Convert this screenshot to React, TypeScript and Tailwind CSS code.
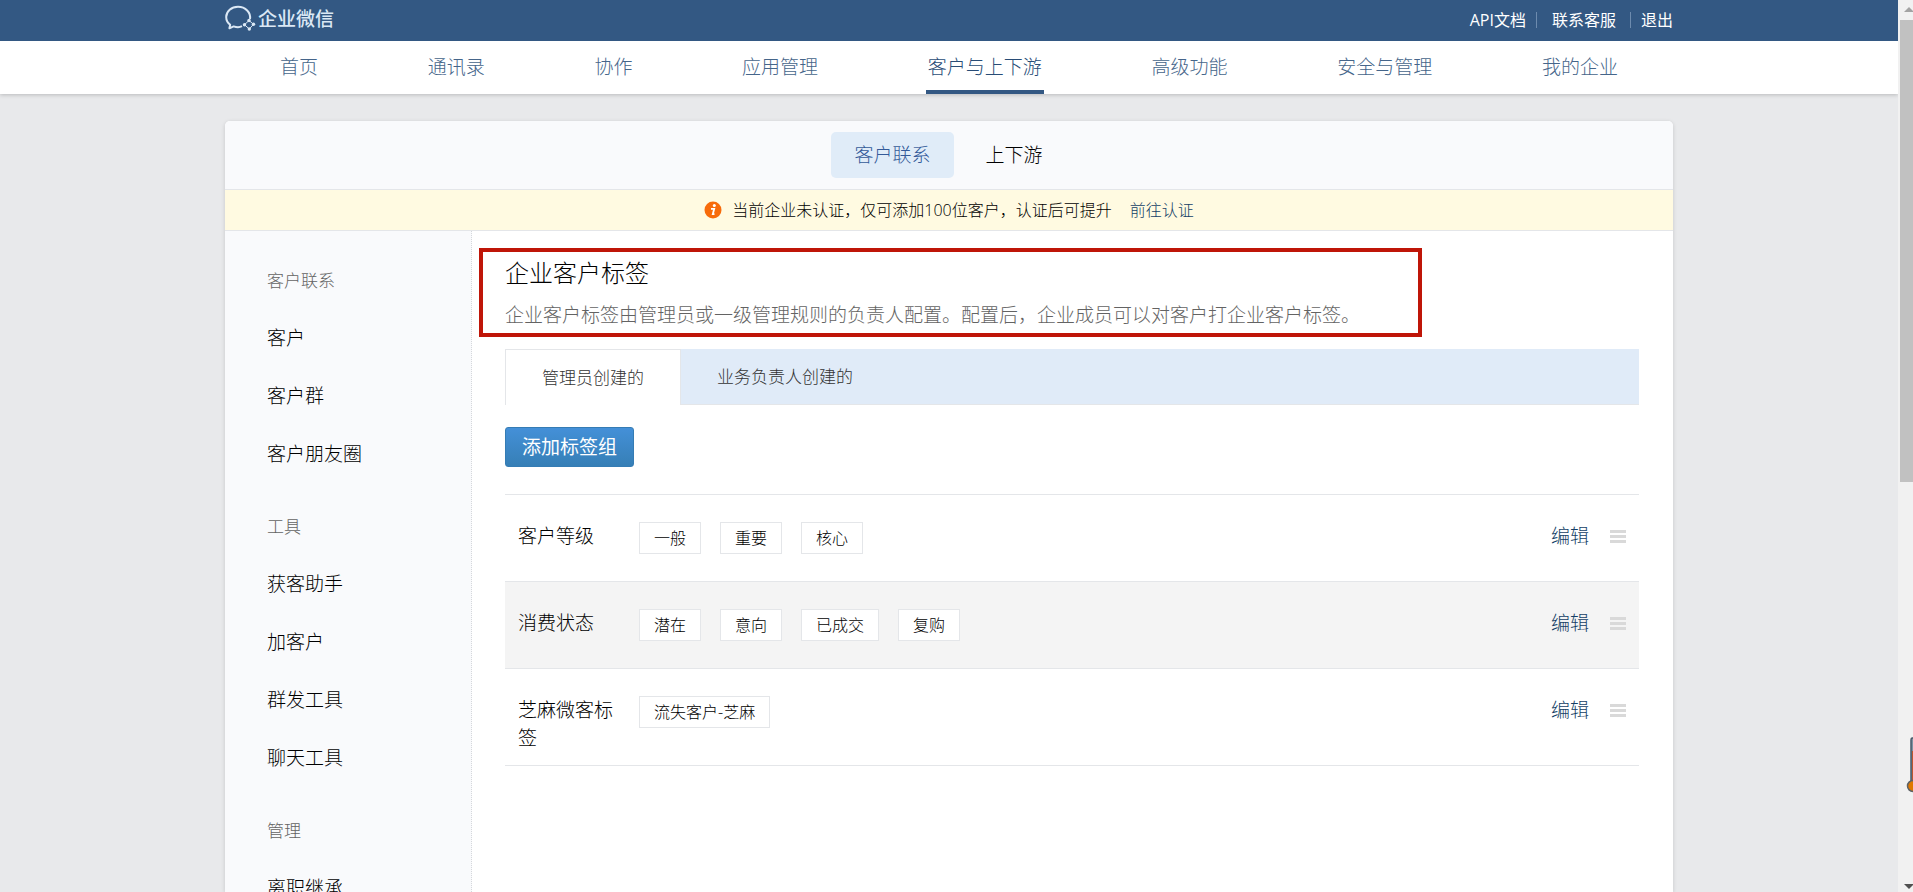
const navItems = ['首页', '通讯录', '协作', '应用管理', '客户与上下游', '高级功能', '安全与管理', '我的企业']

const menuGroups = [
    { title: '客户联系', items: ['客户', '客户群', '客户朋友圈'] },
    { title: '工具', items: ['获客助手', '加客户', '群发工具', '聊天工具'] },
    { title: '管理', items: ['离职继承'] },
]

type TagGroup = {
    id: number
    name: string
    tags: string[]
}

const tagGroups: TagGroup[] = [
    { id: 1, name: '客户等级', tags: ['一般', '重要', '核心'] },
    { id: 2, name: '消费状态', tags: ['潜在', '意向', '已成交', '复购'] },
    { id: 3, name: '芝麻微客标签', tags: ['流失客户-芝麻'] },
]

function Logo() {
    return (
        <a href="#" className="flex items-center gap-[2px] pb-1 text-[#dbe8f5]">
            <svg width="31" height="27" viewBox="0 0 31 27" fill="none" stroke="currentColor" strokeWidth="2">
                <path d="M25 14C26 7.500 20.500 1.800 13 1.800C6.500 1.800 1.200 6.200 1.200 12C1.200 15.200 2.700 17.900 5.200 19.800L4.400 23.300L8.600 21.400C11.600 22.400 15 22.300 17 21.200" strokeLinejoin="round" />
                <path d="M24 15.500L28.500 19.300L24.300 24L19.500 19.700Z" strokeWidth="1" />
                <circle cx="24" cy="15.500" r="1.700" fill="currentColor" stroke="none" />
                <circle cx="28.500" cy="19.300" r="1.700" fill="currentColor" stroke="none" />
                <circle cx="24.300" cy="24" r="1.700" fill="currentColor" stroke="none" />
                <circle cx="19.500" cy="19.700" r="1.700" fill="currentColor" stroke="none" />
            </svg>
            <span className="text-[19px] leading-7 font-medium">企业微信</span>
        </a>
    )
}

function Header() {
    return (
        <header className="relative shadow-[0_1px_4px_rgba(0,0,0,0.2)]">
            <div className="bg-[#335883]">
                <div className="mx-auto flex h-[41px] max-w-[1448px] items-center justify-between">
                    <Logo />
                    <div className="flex items-center pb-[2px] text-base leading-6 font-normal text-white">
                        <a href="#">API文档</a>
                        <span className="ml-[10px] h-4 w-px bg-[#6d8bae]"></span>
                        <a href="#" className="ml-[15px]">联系客服</a>
                        <span className="ml-[14px] h-4 w-px bg-[#6d8bae]"></span>
                        <a href="#" className="ml-[10px]">退出</a>
                    </div>
                </div>
            </div>
            <nav className="bg-white">
                <div className="mx-auto flex h-[53px] max-w-[1448px] justify-between px-[53px]">
                    {navItems.map((item) => (
                        <a key={item} href="#"
                            className={item === '客户与上下游'
                                ? 'border-b-4 border-[#335883] px-[2px] pt-3 text-[19px] leading-7 text-[#284c76]'
                                : 'px-[2px] pt-3 text-[19px] leading-7 text-[#45658a]'}>
                            {item}
                        </a>
                    ))}
                </div>
            </nav>
        </header>
    )
}

function Notice() {
    return (
        <div className="flex h-[42px] shrink-0 items-center justify-center border-y border-[#e4e6e9] bg-[#fffae1] text-base leading-6">
            <svg width="18" height="18" viewBox="0 0 18 18" className="mr-[10px]">
                <circle cx="9" cy="9" r="8.500" fill="#f76b0a" />
                <circle cx="10.300" cy="4.500" r="1.500" fill="#fff" />
                <path d="M7 7.800H10.200L8.800 13.200H10.500" fill="none" stroke="#fff" strokeWidth="1.800" />
            </svg>
            <span>当前企业未认证，仅可添加100位客户，认证后可提升</span>
            <a href="#" className="ml-[18px] text-[#143f66]">前往认证</a>
        </div>
    )
}

function Sidebar() {
    return (
        <aside className="w-[247px] shrink-0 border-r border-dotted border-[#d5d8dc] bg-[#f9fafc] pt-[22px] pl-[42px]">
            {menuGroups.map((group) => (
                <div key={group.title} className="mb-4">
                    <h3 className="text-[17px] leading-[56px] text-[#636363]">{group.title}</h3>
                    <ul>
                        {group.items.map((item) => (
                            <li key={item}>
                                <a href="#" className="block text-[19px] leading-[58px]">{item}</a>
                            </li>
                        ))}
                    </ul>
                </div>
            ))}
        </aside>
    )
}

function TagTable() {
    return (
        <table className="mt-[27px] w-full border-t border-[#e4e6e9]">
            <tbody>
                {tagGroups.map((group) => (
                    <tr key={group.id} className="border-b border-[#e4e6e9] align-top even:bg-[#f4f4f4]">
                        <th scope="row" className="w-[134px] pt-[27px] pr-[26px] pb-[13px] pl-[13px] text-left text-[19px] leading-7 font-light">
                            {group.name}
                        </th>
                        <td className="pt-[27px] pb-[13px]">
                            <ul className="flex flex-wrap gap-x-[19px]">
                                {group.tags.map((tag) => (
                                    <li key={tag} className="mb-[14px] border border-[#e4e6e9] bg-white px-[14px] text-base leading-[30px]">
                                        {tag}
                                    </li>
                                ))}
                            </ul>
                        </td>
                        <td className="w-[102px] pt-[27px] pr-[13px] pb-[13px]">
                            <div className="flex h-7 items-center justify-end gap-[21px]">
                                <button type="button" className="text-[19px] leading-7 text-[#143f66]">编辑</button>
                                <button type="button" aria-label="拖动排序">
                                    <svg width="16" height="13" viewBox="0 0 16 13" fill="#d9d9d9">
                                        <path d="M0 0H16V3H0ZM0 5H16V8H0ZM0 10H16V13H0Z" />
                                    </svg>
                                </button>
                            </div>
                        </td>
                    </tr>
                ))}
            </tbody>
        </table>
    )
}

function Content() {
    return (
        <main className="min-w-0 flex-1 pr-[34px] pl-[33px]">
            <div className="relative pt-[26px]">
                <h2 className="text-2xl leading-8">企业客户标签</h2>
                <p className="mt-3 text-[19px] leading-7 text-[#636363]">
                    企业客户标签由管理员或一级管理规则的负责人配置。配置后，企业成员可以对客户打企业客户标签。
                </p>
                <div className="pointer-events-none absolute top-[17px] -left-[26px] h-[89px] w-[943px] border-4 border-[#bf1508]"></div>
            </div>
            <div className="mt-5 flex h-14 bg-[#e0ebf8] text-[17px] text-[#333]">
                <button type="button" className="border-x border-t border-[#e4e6e9] bg-white px-9">管理员创建的</button>
                <button type="button" className="flex-1 border-b border-[#e4e6e9] px-9 text-left">业务负责人创建的</button>
            </div>
            <button type="button" className="mt-[22px] block h-10 rounded-[3px] border border-[#357cb4] bg-linear-to-b from-[#4490d8] to-[#367fb6] px-4 text-[19px] leading-7 font-normal text-white">
                添加标签组
            </button>
            <TagTable />
        </main>
    )
}

function ScrollRail() {
    return (
        <div className="relative flex w-[15px] shrink-0 flex-col justify-between overflow-hidden bg-[#f1f1f1] pl-[2px]">
            <div className="flex h-full flex-col">
                <svg width="13" height="20" viewBox="0 0 13 20" className="shrink-0">
                    <path d="M4 12L9 7L14 12Z" fill="#a3a3a3" />
                </svg>
                <div className="h-[53%] bg-[#c1c1c1]"></div>
            </div>
            <svg width="13" height="20" viewBox="0 0 13 20" className="shrink-0">
                <path d="M4 12L9 17L14 12Z" fill="#505050" />
            </svg>
            <svg width="8" height="56" viewBox="0 0 8 56" className="absolute right-0 bottom-[99px]">
                <path d="M8 1H7Q6 1 6 3V45H8Z" fill="#7d93a3" />
                <path d="M7 14H8V46H7Z" fill="#c0562f" />
                <path d="M8 1H7Q6 1 6 3V45" fill="none" stroke="#475969" strokeWidth="1.500" />
                <circle cx="8" cy="49" r="5.500" fill="#e07800" stroke="#5d6266" strokeWidth="1.500" />
            </svg>
        </div>
    )
}

export default function App() {
    return (
        <div className="flex h-screen overflow-hidden bg-[#e8e9eb] font-['Open_Sans','Noto_Sans_CJK_SC',sans-serif] font-light text-black">
            <div className="flex min-w-0 flex-1 flex-col">
                <Header />
                <div className="mx-auto mt-[27px] flex min-h-0 w-full max-w-[1448px] flex-1 flex-col rounded-t-[5px] bg-white shadow-[0_1px_4px_rgba(0,0,0,0.15)]">
                    <div className="flex h-[68px] shrink-0 items-center justify-center gap-2 rounded-t-[5px] bg-[#f9fafc] text-[19px] leading-7">
                        <button type="button" className="h-[46px] rounded-[5px] bg-[#e0ecf8] px-[23px] text-[#335a99]">客户联系</button>
                        <button type="button" className="h-[46px] px-6">上下游</button>
                    </div>
                    <Notice />
                    <div className="flex min-h-0 flex-1">
                        <Sidebar />
                        <Content />
                    </div>
                </div>
            </div>
            <ScrollRail />
        </div>
    )
}
